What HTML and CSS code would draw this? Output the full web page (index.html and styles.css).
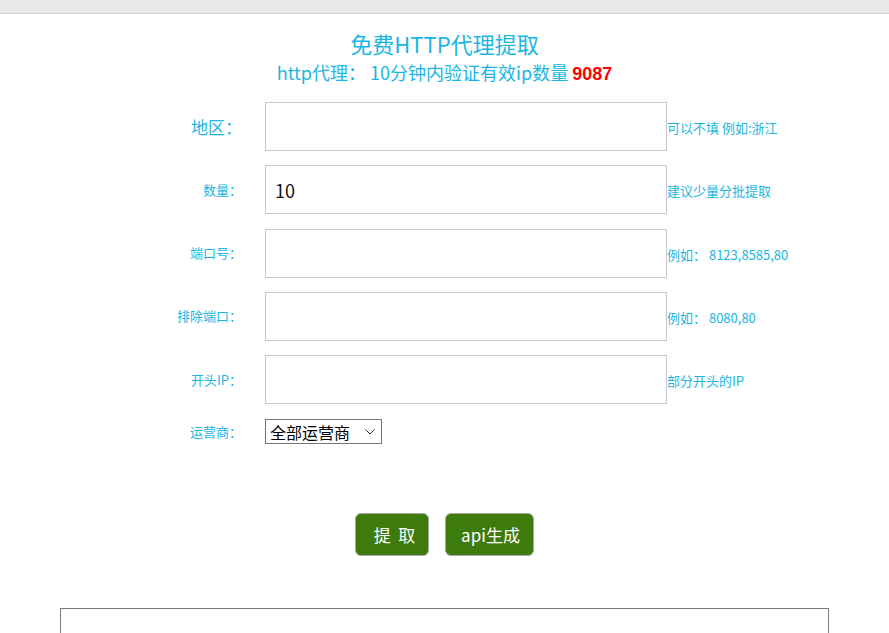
FILE: index.html
```html
<!DOCTYPE html>
<html lang="zh-CN">
<head>
<meta charset="utf-8">
<title>免费HTTP代理提取</title>
<link rel="stylesheet" href="styles.css">
</head>
<body>
<div class="topbar"></div>
<div class="page">
  <h1 class="title">免费HTTP代理提取</h1>
  <p class="subtitle">http代理： 10分钟内验证有效ip数量 <b class="count">9087</b></p>
  <form class="form">
    <label class="label label-big">地区：</label>
    <input class="field" type="text">
    <span class="hint">可以不填 例如:浙江</span>

    <label class="label">数量：</label>
    <input class="field" type="text" value="10">
    <span class="hint">建议少量分批提取</span>

    <label class="label">端口号：</label>
    <input class="field" type="text">
    <span class="hint">例如： 8123,8585,80</span>

    <label class="label">排除端口：</label>
    <input class="field" type="text">
    <span class="hint">例如： 8080,80</span>

    <label class="label">开头IP：</label>
    <input class="field" type="text">
    <span class="hint">部分开头的IP</span>

    <label class="label label-sel">运营商：</label>
    <div class="sel-cell">
      <div class="sel-wrap">
        <select class="select"><option>全部运营商</option><option>电信</option><option>联通</option><option>移动</option></select>
        <svg class="chev" width="10" height="6" viewBox="0 0 10 6"><path d="M0.5 0.5 L5 5 L9.5 0.5" fill="none" stroke="#333" stroke-width="1"/></svg>
      </div>
    </div>
    <span></span>
  </form>
  <div class="actions">
    <button class="btn btn-get" type="button">提&nbsp;&nbsp;取</button>
    <button class="btn btn-api" type="button">api生成</button>
  </div>
  <div class="result"></div>
</div>
</body>
</html>
```
FILE: styles.css
```css
html, body {
  margin: 0;
  padding: 0;
  background: #fff;
  overflow: hidden;
}
body {
  font-family: "Noto Sans CJK SC", "Noto Sans", sans-serif;
  color: #1bb6e2;
}
.topbar {
  height: 13px;
  background: #e9e9e9;
  border-bottom: 1px solid #d3d3d3;
}
.page {
  display: flex;
  flex-direction: column;
}
.title {
  margin: 14px 0 0;
  font-size: 22px;
  font-weight: normal;
  line-height: 30px;
  text-align: center;
  color: #1bb6e2;
}
.subtitle {
  margin: 0;
  font-size: 18px;
  line-height: 28px;
  text-align: center;
  color: #1bb6e2;
}
.count {
  color: #ff0000;
  font-family: "Liberation Sans", Arial, sans-serif;
  font-weight: bold;
}
.form {
  margin-top: 14px;
  display: grid;
  grid-template-columns: 242px 402px auto;
  row-gap: 14.25px;
  align-items: center;
}
.label {
  justify-self: end;
  font-size: 13px;
  line-height: 20px;
  margin-right: 0;
}
.label-big {
  font-size: 17px;
}
.field {
  margin-left: 23px;
  box-sizing: border-box;
  width: 402px;
  height: 49px;
  border: 1px solid #c8c8c8;
  padding: 0 9px;
  font-family: "Noto Sans CJK SC", "Noto Sans", sans-serif;
  font-size: 18px;
  color: #111;
  outline: none;
  background: #fff;
}
.hint {
  margin-left: 23px;
  font-size: 13px;
  line-height: 20px;
  padding-top: 3px;
  white-space: nowrap;
}
.label-sel {
  margin-top: 1px;
}
.sel-cell {
  margin-left: 23px;
  padding-top: 1px;
}
.sel-wrap {
  position: relative;
  width: 117px;
  height: 25px;
}
.select {
  box-sizing: border-box;
  width: 117px;
  height: 25px;
  border: 1px solid #767676;
  border-radius: 0;
  background: #fff;
  color: #000;
  font-family: "Noto Sans CJK SC", "Noto Sans", sans-serif;
  font-size: 16px;
  padding: 0 2px 0 4px;
  appearance: none;
  -webkit-appearance: none;
  outline: none;
}
.chev {
  position: absolute;
  right: 7px;
  top: 10px;
  pointer-events: none;
}
.actions {
  margin-top: 69px;
  display: flex;
  justify-content: center;
  gap: 16px;
  padding-right: 1px;
}
.btn {
  height: 43px;
  border: 1px solid #a8a8a8;
  border-radius: 6px;
  background: #3d7c0c;
  color: #fff;
  font-family: "Noto Sans CJK SC", "Noto Sans", sans-serif;
  font-size: 17px;
  padding: 0;
  cursor: pointer;
}
.btn-get {
  width: 74px;
  padding-left: 6px;
}
.btn-api {
  width: 89px;
  padding-left: 3px;
}
.result {
  margin: 52px auto 0;
  box-sizing: border-box;
  width: 769px;
  height: 200px;
  border: 1px solid #7a7a7a;
}
```
